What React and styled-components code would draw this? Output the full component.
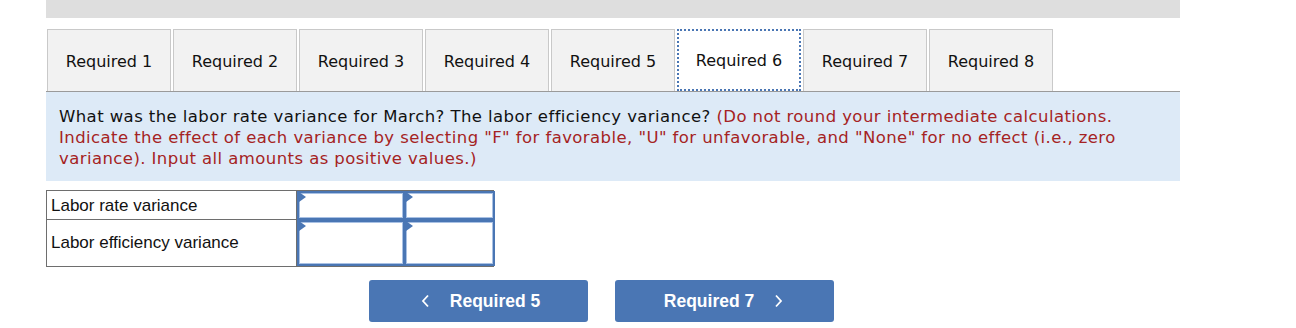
import React from 'react';
import styled, { createGlobalStyle } from 'styled-components';

const GlobalStyle = createGlobalStyle`
  body {
    margin: 0;
    background: #fff;
    font-family: "DejaVu Sans", Verdana, sans-serif;
  }
`;

const Page = styled.div`
  width: 1134px;
  margin-left: 46px;
`;

const TopBar = styled.div`
  height: 18px;
  background: #dedede;
`;

const TabRow = styled.div`
  display: flex;
  gap: 2px;
  margin-top: 11px;
  padding-left: 1px;
  border-bottom: 1px solid #9a9a9a;
`;

const Tab = styled.div`
  box-sizing: border-box;
  width: 124px;
  height: 62px;
  display: flex;
  align-items: center;
  justify-content: center;
  padding-top: 1px;
  font-size: 16px;
  color: #111;
  background: ${p => (p.active ? '#fff' : '#f2f2f2')};
  border: ${p => (p.active ? '2px dotted #4a76b4' : '1px solid #c9c9c9')};
  border-bottom: ${p => (p.active ? '2px dotted #4a76b4' : 'none')};
`;

const Prompt = styled.div`
  background: #ddeaf7;
  padding: 14px 13px 10px;
  height: 89px;
  box-sizing: border-box;
  font-size: 16.5px;
  letter-spacing: 0.42px;
  line-height: 21px;
  color: #111;
`;

const Note = styled.span`
  color: #a52323;
`;

const Grid = styled.div`
  display: grid;
  grid-template-columns: 250px 107px 91px;
  grid-template-rows: 29px 46px;
  width: 448px;
  margin-top: 9px;
  border: 1px solid #6e6e6e;
  box-sizing: border-box;
`;

const Label = styled.div`
  font-family: "Liberation Sans", Arial, sans-serif;
  font-size: 17px;
  color: #111;
  padding: 5px 4px 0;
  border-right: 1px solid #6e6e6e;
  border-bottom: ${p => (p.last ? 'none' : '1px solid #6e6e6e')};
  display: flex;
  align-items: ${p => (p.last ? 'center' : 'flex-start')};
  padding-bottom: ${p => (p.last ? '6px' : '0')};
`;

const Cell = styled.div`
  position: relative;
  box-sizing: border-box;
  border: 2px solid #4a76b4;
  box-shadow: inset 0 0 0 1px #a9c1e4;
  background: #fff;
  border-right-width: ${p => (p.edge ? '2px' : '1px')};
`;

const Marker = styled.span`
  position: absolute;
  left: 0;
  top: -1px;
  width: 0;
  height: 0;
  border-top: 5px solid transparent;
  border-bottom: 5px solid transparent;
  border-left: 7px solid #4a76b4;
`;

const Nav = styled.div`
  display: flex;
  gap: 27px;
  margin: 13px 0 0 323px;
`;

const NavButton = styled.button`
  width: 219px;
  height: 42px;
  border: none;
  border-radius: 3px;
  background: #4a76b4;
  color: #fff;
  font-family: "Liberation Sans", Arial, sans-serif;
  font-weight: bold;
  font-size: 17.5px;
  display: flex;
  align-items: center;
  justify-content: center;
  gap: 20px;
  padding: 0;
  padding-left: ${p => (p.prev ? '4px' : '0')};
  padding-right: ${p => (p.prev ? '0' : '2px')};
`;

const Chevron = ({ dir }) => (
  <svg width="9" height="14" viewBox="0 0 9 14">
    <path
      d={dir === 'left' ? 'M7 1.5 L2 7 L7 12.5' : 'M2 1.5 L7 7 L2 12.5'}
      fill="none"
      stroke="#fff"
      strokeWidth="1.8"
    />
  </svg>
);

const tabs = [1, 2, 3, 4, 5, 6, 7, 8];

export default function App() {
  return (
    <Page>
      <GlobalStyle />
      <TopBar />
      <TabRow>
        {tabs.map(n => (
          <Tab key={n} active={n === 6}>Required {n}</Tab>
        ))}
      </TabRow>
      <Prompt>
        What was the labor rate variance for March? The labor efficiency variance?{' '}
        <Note>
          (Do not round your intermediate calculations. Indicate the effect of each variance by
          selecting "F" for favorable, "U" for unfavorable, and "None" for no effect (i.e., zero
          variance). Input all amounts as positive values.)
        </Note>
      </Prompt>
      <Grid>
        <Label>Labor rate variance</Label>
        <Cell><Marker /></Cell>
        <Cell edge><Marker /></Cell>
        <Label last>Labor efficiency variance</Label>
        <Cell><Marker /></Cell>
        <Cell edge><Marker /></Cell>
      </Grid>
      <Nav>
        <NavButton prev>
          <Chevron dir="left" />
          Required 5
        </NavButton>
        <NavButton>
          Required 7
          <Chevron dir="right" />
        </NavButton>
      </Nav>
    </Page>
  );
}
